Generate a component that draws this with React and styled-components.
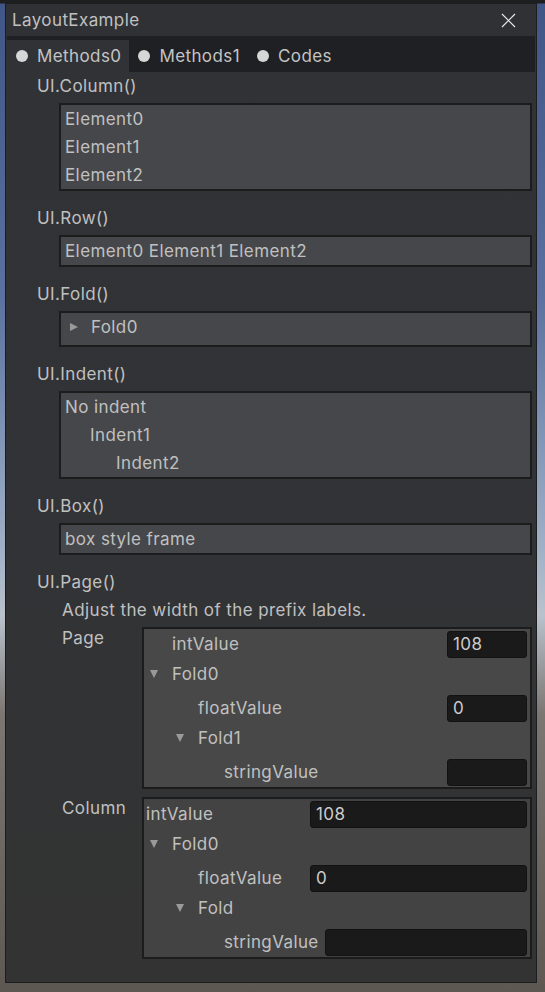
import styled, { createGlobalStyle } from 'styled-components';

const GlobalStyle = createGlobalStyle`
  html, body {
    margin: 0;
    padding: 0;
  }
  body {
    width: 545px;
    height: 992px;
    overflow: hidden;
    font-family: Inter, 'Noto Sans', sans-serif;
    background: linear-gradient(
      to bottom,
      #1d1e20 0px,
      #1d1e20 3px,
      #3f5686 4px,
      #5b72a0 30%,
      #9fb0c6 55%,
      #b9c2cc 62%,
      #7c7672 72%,
      #5e5853 100%
    );
  }
`;

const Window = styled.div`
  margin: 3px 0 0 5px;
  width: 532px;
  height: 980px;
  box-sizing: border-box;
  border: 1px solid #1c1d1f;
  display: flex;
  flex-direction: column;
  background: linear-gradient(to bottom, #303236 0%, #323336 50%, #333333 100%);
  color: #c0c0c0;
  font-size: 17px;
  letter-spacing: 0.4px;
`;

const TitleBar = styled.div`
  height: 32px;
  background: #2f3135;
  display: flex;
  align-items: center;
  justify-content: space-between;
  padding: 0 20px 0 6px;
`;

const Title = styled.span`
  color: #c0c0c0;
`;

const TabBar = styled.div`
  height: 32px;
  margin: 0 1px;
  padding-top: 4px;
  background: #1f2023;
  display: flex;
`;

const Tab = styled.div`
  display: flex;
  align-items: center;
  gap: 9px;
  padding: 0 8px 0 9px;
  background: ${(p) => (p.$active ? '#303236' : 'transparent')};
  color: #c4c4c4;
`;

const Bullet = styled.span`
  width: 12px;
  height: 12px;
  border-radius: 50%;
  background: #d6d6d6;
`;

const Content = styled.div`
  flex: 1;
  padding: 0 4px 0 31px;
  display: flex;
  flex-direction: column;
`;

const SectionLabel = styled.div`
  height: 28px;
  line-height: 28px;
`;

const Panel = styled.div`
  margin: 3px 0 13px 22px;
  border: 2px solid #1c1c1d;
  background: ${(p) => p.$bg || '#46474a'};
  padding: ${(p) => p.$pad || '0 4px'};
`;

const Line = styled.div`
  height: ${(p) => p.$h || 28}px;
  line-height: ${(p) => p.$h || 28}px;
  padding-left: ${(p) => p.$indent || 0}px;
  display: flex;
  align-items: center;
  white-space: pre;
`;

const Arrow = styled.span`
  width: 0;
  height: 0;
  margin-right: ${(p) => p.$gap || 14}px;
  border-style: solid;
  ${(p) =>
    p.$open
      ? `border-width: 8px 4.5px 0 4.5px; border-color: #9a9a9a transparent transparent transparent;`
      : `border-width: 4.5px 0 4.5px 8px; border-color: transparent transparent transparent #9a9a9a;`}
`;

const PageBody = styled.div`
  margin-left: 25px;
  display: flex;
  flex-direction: column;
`;

const PropRow = styled.div`
  display: flex;
  margin-bottom: ${(p) => p.$mb || 0}px;
`;

const PropLabel = styled.div`
  width: 80px;
  flex: 0 0 80px;
  height: 28px;
  line-height: 28px;
`;

const FieldBox = styled.div`
  flex: 1;
  margin-top: 3px;
  border: 2px solid #1c1c1c;
  background: ${(p) => p.$bg};
`;

const FieldRow = styled.div`
  height: 30px;
  display: flex;
  align-items: center;
  padding-left: ${(p) => p.$indent}px;
  padding-right: 3px;
`;

const FieldLabel = styled.span`
  flex: ${(p) => (p.$wide ? '0 0 auto' : '1')};
  min-width: ${(p) => p.$min || 0}px;
  margin-right: 6px;
  white-space: nowrap;
`;

const Input = styled.div`
  box-sizing: border-box;
  height: 27px;
  width: ${(p) => (p.$w ? `${p.$w}px` : 'auto')};
  flex: ${(p) => (p.$w ? '0 0 auto' : '1')};
  background: #1a1a1a;
  border: 1px solid #121212;
  border-radius: 3px;
  padding-left: 5px;
  line-height: 25px;
  color: #cccccc;
`;

const FoldHead = styled.div`
  height: 30px;
  display: flex;
  align-items: center;
  padding-left: ${(p) => p.$indent}px;
`;

const FoldBody = styled.div`
  padding-top: 4px;
`;

const CloseIcon = () => (
  <svg width="15" height="15" viewBox="0 0 15 15">
    <path d="M1 1 L14 14 M14 1 L1 14" stroke="#e8e8e8" strokeWidth="1.2" />
  </svg>
);

const PageFields = () => (
  <>
    <FieldRow $indent={28}>
      <FieldLabel>intValue</FieldLabel>
      <Input $w={80}>108</Input>
    </FieldRow>
    <FoldHead $indent={6}>
      <Arrow $open />
      Fold0
    </FoldHead>
    <FoldBody>
      <FieldRow $indent={54}>
        <FieldLabel>floatValue</FieldLabel>
        <Input $w={80}>0</Input>
      </FieldRow>
      <FoldHead $indent={32}>
        <Arrow $open />
        Fold1
      </FoldHead>
      <FoldBody>
        <FieldRow $indent={80}>
          <FieldLabel>stringValue</FieldLabel>
          <Input $w={80} />
        </FieldRow>
      </FoldBody>
    </FoldBody>
  </>
);

const ColumnFields = () => (
  <>
    <FieldRow $indent={2}>
      <FieldLabel $wide $min={158}>intValue</FieldLabel>
      <Input>108</Input>
    </FieldRow>
    <FoldHead $indent={6}>
      <Arrow $open />
      Fold0
    </FoldHead>
    <FoldBody>
      <FieldRow $indent={54}>
        <FieldLabel $wide $min={106}>floatValue</FieldLabel>
        <Input>0</Input>
      </FieldRow>
      <FoldHead $indent={32}>
        <Arrow $open />
        Fold
      </FoldHead>
      <FoldBody>
        <FieldRow $indent={80}>
          <FieldLabel $wide $min={80}>stringValue</FieldLabel>
          <Input />
        </FieldRow>
      </FoldBody>
    </FoldBody>
  </>
);

export default function App() {
  return (
    <>
      <GlobalStyle />
      <Window>
        <TitleBar>
          <Title>LayoutExample</Title>
          <CloseIcon />
        </TitleBar>
        <TabBar>
          <Tab $active>
            <Bullet />
            Methods0
          </Tab>
          <Tab>
            <Bullet />
            Methods1
          </Tab>
          <Tab>
            <Bullet />
            Codes
          </Tab>
        </TabBar>
        <Content>
          <SectionLabel>UI.Column()</SectionLabel>
          <Panel>
            <Line>Element0</Line>
            <Line>Element1</Line>
            <Line>Element2</Line>
          </Panel>

          <SectionLabel>UI.Row()</SectionLabel>
          <Panel>
            <Line>Element0 Element1 Element2</Line>
          </Panel>

          <SectionLabel>UI.Fold()</SectionLabel>
          <Panel $pad="0 4px 4px 9px">
            <Line>
              <Arrow $gap={13} />
              Fold0
            </Line>
          </Panel>

          <SectionLabel>UI.Indent()</SectionLabel>
          <Panel>
            <Line>No indent</Line>
            <Line $indent={25}>Indent1</Line>
            <Line $indent={51}>Indent2</Line>
          </Panel>

          <SectionLabel>UI.Box()</SectionLabel>
          <Panel>
            <Line>box style frame</Line>
          </Panel>

          <SectionLabel>UI.Page()</SectionLabel>
          <PageBody>
            <SectionLabel>Adjust the width of the prefix labels.</SectionLabel>
            <PropRow $mb={5}>
              <PropLabel>Page</PropLabel>
              <FieldBox $bg="#484848">
                <PageFields />
              </FieldBox>
            </PropRow>
            <PropRow>
              <PropLabel>Column</PropLabel>
              <FieldBox $bg="#434343">
                <ColumnFields />
              </FieldBox>
            </PropRow>
          </PageBody>
        </Content>
      </Window>
    </>
  );
}
